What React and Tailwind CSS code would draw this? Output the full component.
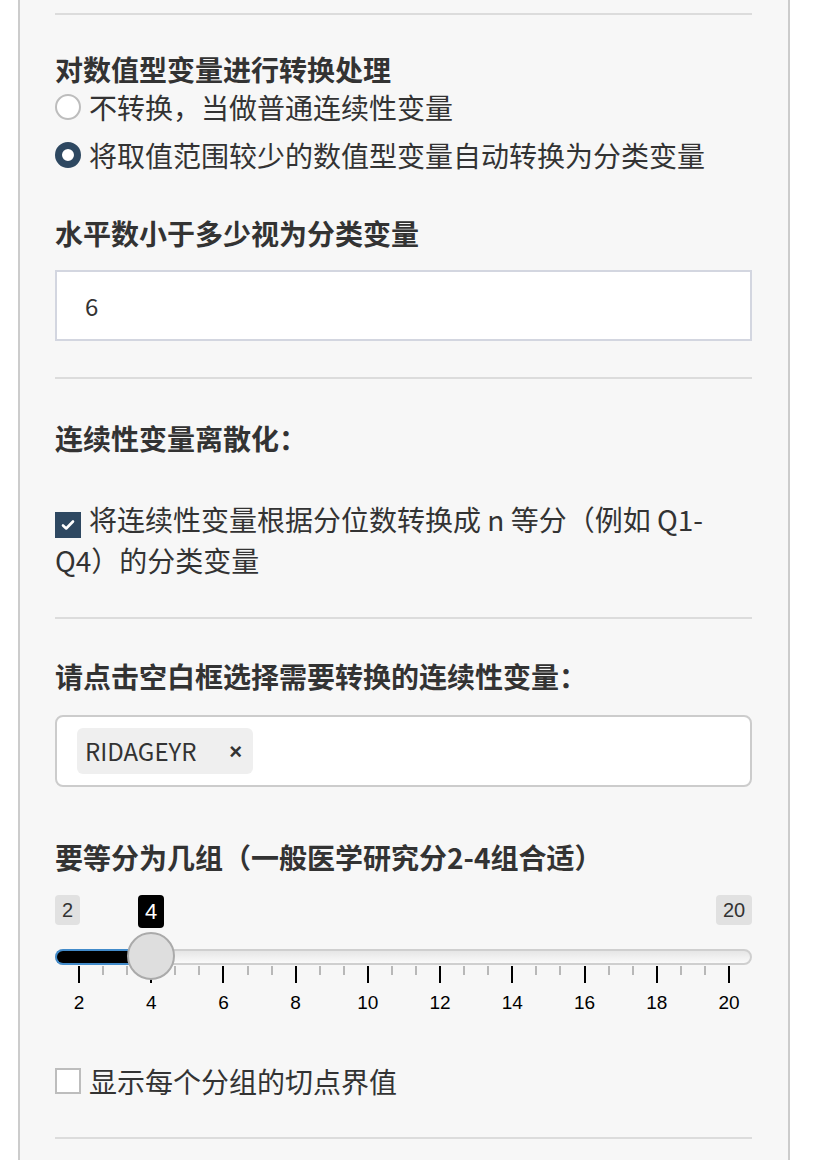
import React from 'react';

const majors = [2, 4, 6, 8, 10, 12, 14, 16, 18, 20];

function Radio({ checked, label }) {
  return (
    <div className="flex h-[48px] items-center gap-[8px]">
      {checked ? (
        <span className="h-[26px] w-[26px] rounded-full border-[7px] border-[#2e4861] bg-white" />
      ) : (
        <span className="h-[26px] w-[26px] rounded-full border-2 border-[#bdbdbd] bg-white" />
      )}
      <span>{label}</span>
    </div>
  );
}

function Slider() {
  const left = 24;
  const span = 650;
  const value = 4;
  const handleX = left + ((value - 2) / 18) * span;
  const minors = [];
  for (let i = 0; i < 27; i++) {
    if (i % 3 !== 0) minors.push(left + (i * span) / 27);
  }
  return (
    <div className="relative h-[130px] w-full">
      {/* min / max / value labels */}
      <span className="absolute left-0 top-0 flex h-[30px] w-[25px] items-center justify-center rounded-[4px] bg-[#e1e1e1] font-['Liberation_Sans',sans-serif] text-[20px] text-[#333]">
        2
      </span>
      <span className="absolute right-0 top-0 flex h-[30px] w-[36px] items-center justify-center rounded-[4px] bg-[#e1e1e1] font-['Liberation_Sans',sans-serif] text-[20px] text-[#333]">
        20
      </span>
      <span
        className="absolute top-0 flex h-[33px] w-[26px] -translate-x-1/2 items-center justify-center rounded-[4px] bg-black font-['Liberation_Sans',sans-serif] text-[22px] text-white"
        style={{ left: handleX }}
      >
        {value}
      </span>

      {/* track */}
      <div className="absolute left-0 right-0 top-[54px] h-[16px] rounded-full border-2 border-[#cfcfcf] bg-gradient-to-b from-[#e6e6e6] to-[#fafafa]" />
      <div
        className="absolute left-0 top-[54px] h-[16px] rounded-l-full border-2 border-r-0 border-[#428bca] bg-black"
        style={{ width: handleX }}
      />

      {/* grid */}
      {minors.map((x, i) => (
        <span key={i} className="absolute top-[71px] h-[9px] w-[2px] bg-[#b8b8b8]" style={{ left: x - 1 }} />
      ))}
      {majors.map((m, i) => {
        const x = left + (i * span) / 9;
        return (
          <React.Fragment key={m}>
            <span className="absolute top-[71px] h-[17px] w-[2px] bg-black" style={{ left: x - 1 }} />
            <span
              className="absolute top-[96px] -translate-x-1/2 font-['Liberation_Sans',sans-serif] text-[19px] leading-[24px] text-black"
              style={{ left: x }}
            >
              {m}
            </span>
          </React.Fragment>
        );
      })}

      {/* handle */}
      <span
        className="absolute top-[37px] h-[48px] w-[48px] -translate-x-1/2 rounded-full border-2 border-[#aaaaaa] bg-[#dedede]"
        style={{ left: handleX }}
      />
    </div>
  );
}

export default function App() {
  return (
    <div className="min-h-[1160px] bg-white font-['Noto_Sans_CJK_SC',sans-serif] text-[28px] text-[#333]">
      <div className="ml-[18px] min-h-[1160px] w-[772px] border-x-2 border-[#cccccc] bg-[#f7f7f7] pl-[35px] pr-[36px] pt-[13px]">
        <hr className="border-0 border-t-2 border-[#dcdcdc]" />

        {/* 数值型变量转换 */}
        <h3 className="mt-[40px] text-[28px] font-bold leading-[28px]">对数值型变量进行转换处理</h3>
        <Radio label="不转换，当做普通连续性变量" />
        <Radio checked label="将取值范围较少的数值型变量自动转换为分类变量" />

        <h3 className="mt-[40px] text-[28px] font-bold leading-[28px]">水平数小于多少视为分类变量</h3>
        <div className="mt-[23px] flex h-[71px] items-center border-2 border-[#d3d6e0] bg-white pl-[28px] text-[24px]">
          6
        </div>

        <hr className="mt-[36px] border-0 border-t-2 border-[#dcdcdc]" />

        {/* 离散化 */}
        <h3 className="mt-[45px] text-[28px] font-bold leading-[28px]">连续性变量离散化：</h3>
        <p className="mt-[47px] leading-[41px]">
          <span className="mr-[8px] inline-flex h-[26px] w-[26px] translate-y-[2px] items-center justify-center bg-[#2e4861] align-baseline">
            <svg width="16" height="16" viewBox="0 0 16 16" fill="none">
              <path d="M3 8.5l3.2 3L13 4.5" stroke="white" strokeWidth="2.6" strokeLinecap="round" strokeLinejoin="round" />
            </svg>
          </span>
          将连续性变量根据分位数转换成 n 等分（例如 Q1-
          <br />
          Q4）的分类变量
        </p>

        <hr className="mt-[36px] border-0 border-t-2 border-[#dcdcdc]" />

        <h3 className="mt-[43px] text-[28px] font-bold leading-[28px]">请点击空白框选择需要转换的连续性变量：</h3>
        <div className="mt-[25px] flex h-[72px] items-center rounded-[8px] border-2 border-[#cccccc] bg-white pl-[20px]">
          <span className="flex h-[46px] w-[176px] items-center rounded-[6px] bg-[#efefef] pl-[8px] text-[24px]">
            RIDAGEYR
            <span className="ml-auto mr-[11px] font-['Liberation_Sans',sans-serif] text-[22px] font-bold">×</span>
          </span>
        </div>

        <h3 className="mt-[56px] text-[28px] font-bold leading-[28px]">要等分为几组（一般医学研究分2-4组合适）</h3>
        <div className="mt-[24px]">
          <Slider />
        </div>

        <div className="mt-[36px] flex h-[40px] items-center gap-[8px]">
          <span className="h-[26px] w-[26px] border-2 border-[#bdbdbd] bg-white" />
          <span>显示每个分组的切点界值</span>
        </div>

        <hr className="mt-[36px] border-0 border-t-2 border-[#dcdcdc]" />
      </div>
    </div>
  );
}
